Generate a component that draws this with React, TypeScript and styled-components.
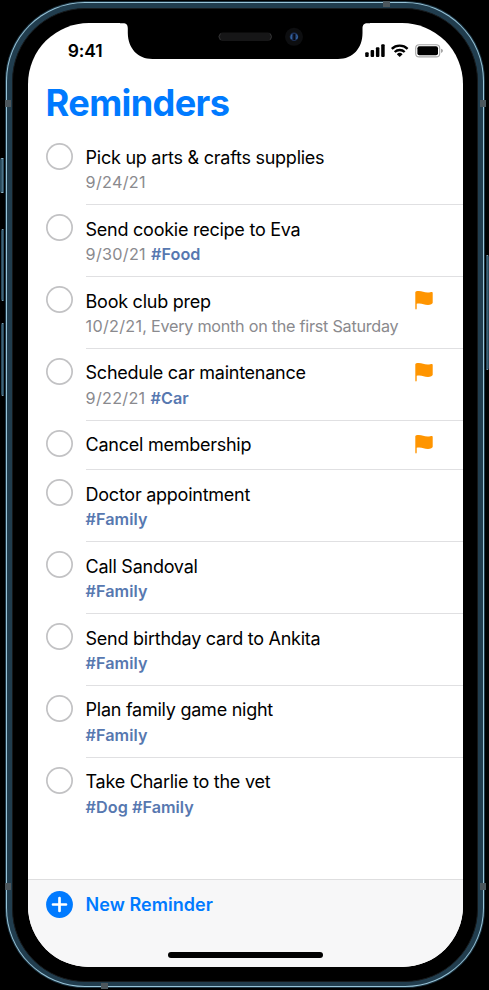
import React from "react";
import styled, { createGlobalStyle, css } from "styled-components";

const GlobalStyle = createGlobalStyle`
  *, *::before, *::after { box-sizing: border-box; }
  body { margin: 0; background: #000; font-family: Inter, "Liberation Sans", sans-serif; }
`;

const Stage = styled.main`
  position: relative;
  width: 489px;
  height: 990px;
  overflow: hidden;
  background: #000;
  padding: 0.8px 3px 1px 5px;
`;

const Rim = styled.div`
  width: 480px;
  height: 987.6px;
  padding: 1.2px;
  border-radius: 80px;
  background: #1c3442;
`;

const Highlight = styled.div`
  height: 100%;
  padding: 1.2px;
  border-radius: 79px;
  background: #98c4d8;
`;

const Band = styled.div`
  height: 100%;
  padding: 4.5px;
  border-radius: 77.9px;
  background: #213d4e;
`;

const Bezel = styled.div`
  height: 100%;
  padding: 14.4px 15.2px;
  border-radius: 73px;
  background: #000;
  border: 1px solid #16191b;
`;

const Screen = styled.div`
  display: flex;
  flex-direction: column;
  height: 944px;
  width: 435px;
  overflow: hidden;
  border-radius: 61px;
  background: #fff;
`;

const SideButton = styled.i<{ $side: "left" | "right"; $top: number; $height: number; $width?: number }>`
  position: absolute;
  top: ${(p) => p.$top}px;
  height: ${(p) => p.$height}px;
  width: ${(p) => p.$width ?? 3}px;
  background: linear-gradient(90deg, #27485a, #587f95);
  border: 1px solid #27485a;
  border-block-color: #8db4c8;
  ${(p) => (p.$side === "left" ? css`left: ${4 - (p.$width ?? 3)}px; border-radius: 2px 0 0 2px;` : css`left: 486px; border-radius: 0 2px 2px 0;`)}
`;

const Antenna = styled.i<{ $x: number; $y: number; $vertical?: boolean }>`
  position: absolute;
  left: ${(p) => p.$x}px;
  top: ${(p) => p.$y}px;
  width: ${(p) => (p.$vertical ? 6 : 7)}px;
  height: ${(p) => (p.$vertical ? 7 : 6)}px;
  background: #4d575d;
`;

const NotchArt = styled.svg`
  position: absolute;
  left: 120px;
  top: 20px;
`;

const StatusBar = styled.header`
  display: flex;
  align-items: center;
  justify-content: space-between;
  height: 54.7px;
  padding: 0 19.3px 0 39.7px;
  flex: none;
`;

const Clock = styled.span`
  font-size: 17.5px;
  font-weight: 600;
  letter-spacing: -0.1px;
`;

const Title = styled.h1`
  flex: none;
  height: 55.5px;
  margin: 0;
  padding-left: 17.5px;
  font-size: 36.2px;
  line-height: 51px;
  font-weight: 700;
  letter-spacing: -0.65px;
  color: #007aff;
`;

const List = styled.ul`
  flex: 1;
  margin: 0;
  padding: 0 0 0 18px;
  list-style: none;
`;

const Row = styled.li<{ $short: boolean }>`
  display: flex;
  height: ${(p) => (p.$short ? 49.5 : 71.85)}px;
`;

const Check = styled.span`
  flex: none;
  width: 27px;
  height: 27px;
  margin: 9.3px 13px 0 -0.5px;
  box-shadow: inset 0 0 0 1.7px #c2c2c4;
  border-radius: 50%;
`;

const RowBody = styled.div<{ $last: boolean }>`
  display: flex;
  flex: 1;
  border-bottom: 1px solid ${(p) => (p.$last ? "transparent" : "#e0e0e2")};
`;

const RowText = styled.div`
  flex: 1;
  padding-top: 11.7px;
  white-space: nowrap;
`;

const RowTitle = styled.div`
  font-size: 18px;
  line-height: 25px;
  letter-spacing: -0.25px;
  color: #000;
`;

const RowNote = styled.div`
  padding-top: 0.5px;
  font-size: 16.2px;
  line-height: 25px;
  letter-spacing: -0.26px;
  color: #8a8a8e;
`;

const DueDate = styled.time`
  letter-spacing: 0.28px;
`;

const Tag = styled.b`
  margin-left: 0.8px;
  font-weight: 600;
  letter-spacing: 0.04px;
  color: #5778b0;

  &:first-child { margin-left: 0; }
`;

const FlagArt = styled.svg`
  flex: none;
  margin: 13px 30px 0 0;
`;

const Toolbar = styled.footer`
  display: flex;
  flex-direction: column;
  align-items: flex-start;
  justify-content: space-between;
  flex: none;
  height: 88px;
  padding: 11px 0 9.5px 17.5px;
  background: #f7f7f8;
  border-top: 1px solid #dededf;
`;

const NewButton = styled.button`
  display: flex;
  align-items: center;
  gap: 13px;
  padding: 0;
  border: 0;
  background: none;
  font: 600 18px/27px Inter, sans-serif;
  letter-spacing: 0.04px;
  color: #007aff;
`;

const HomeIndicator = styled.div`
  width: 155px;
  height: 6px;
  margin-left: 122.5px;
  border-radius: 3px;
  background: #000;
`;

type Reminder = { title: string; date?: string; repeat?: string; tags?: string; flagged?: boolean };

const reminders: Reminder[] = [
  { title: "Pick up arts & crafts supplies", date: "9/24/21" },
  { title: "Send cookie recipe to Eva", date: "9/30/21", tags: "#Food" },
  { title: "Book club prep", date: "10/2/21", repeat: ", Every month on the first Saturday", flagged: true },
  { title: "Schedule car maintenance", date: "9/22/21", tags: "#Car", flagged: true },
  { title: "Cancel membership", flagged: true },
  { title: "Doctor appointment", tags: "#Family" },
  { title: "Call Sandoval", tags: "#Family" },
  { title: "Send birthday card to Ankita", tags: "#Family" },
  { title: "Plan family game night", tags: "#Family" },
  { title: "Take Charlie to the vet", tags: "#Dog #Family" },
];

const Flag = () => (
  <FlagArt width="18" height="20" viewBox="0 0 18 20">
    <path
      d="M0.300 2.300C0.300 1.500 1.800 1 3.800 1C7 1 9 2.500 12.500 2.500C14.800 2.500 16 1.900 16.800 1.900C17.400 1.900 17.700 2.300 17.700 2.800V12.800C17.700 14 15.500 14.900 13 14.900C9.500 14.900 7.500 13.400 4.300 13.400C3 13.400 2.200 13.600 1.700 13.800V18.600C1.700 19.800 0.300 19.800 0.300 18.600Z"
      fill="#ff9500"
    />
  </FlagArt>
);

const Notch = () => (
  <NotchArt width="250" height="42" viewBox="120 20 250 42">
    <path d="M120 20V23.300H123C126.500 23.300 127.800 25 127.800 28.500V33C128 48 137.500 59 152.500 59H338C353 59 362.500 48 362.500 33V28.500C362.500 25 364 23.300 367.500 23.300H370V20Z" fill="#000" />
    <rect x="218.500" y="32.500" width="53.500" height="8.500" rx="4.200" fill="#161617" />
    <path d="M220.500 33.500Q217.500 36.800 220.500 40M270 33.500Q273 36.800 270 40" fill="none" stroke="#343436" strokeWidth="0.900" />
    <circle cx="294" cy="36.800" r="9" fill="#0d0e10" />
    <circle cx="294" cy="36.800" r="4.300" fill="#1c3057" />
    <path d="M292 34.500Q290.500 36.500 291.500 39M296.500 34.500Q298 36.500 296.500 39" fill="none" stroke="#3769a5" strokeWidth="1.200" />
    <path d="M294.200 34V40" stroke="#080a12" strokeWidth="1.800" />
  </NotchArt>
);

const StatusIcons = () => (
  <svg width="80" height="16" viewBox="364 42 80 16">
    <rect x="365.200" y="52.300" width="3.500" height="4.600" rx="1" />
    <rect x="370.600" y="50" width="3.500" height="6.900" rx="1" />
    <rect x="375.900" y="47.200" width="3.500" height="9.700" rx="1" />
    <rect x="381.200" y="44.300" width="3.500" height="12.600" rx="1" />
    <g fill="none" stroke="#000" strokeWidth="2.400">
      <path d="M391.800 48.800A11.500 11.500 0 0 1 407.600 48.800" />
      <path d="M394.700 52A7.300 7.300 0 0 1 404.700 52" />
    </g>
    <path d="M399.700 57L396.800 54.200A4.200 4.200 0 0 1 402.600 54.200Z" />
    <rect x="415.700" y="44.700" width="24" height="12.200" rx="3.500" fill="none" stroke="#a5a5a5" strokeWidth="1.100" />
    <rect x="417.400" y="46.300" width="20.600" height="9" rx="2" />
    <path d="M441 48.700Q443 49.200 443 50.800T441 52.900Z" fill="#a5a5a5" />
  </svg>
);

export default function App() {
  return (
    <Stage>
      <GlobalStyle />
      <Rim>
        <Highlight>
          <Band>
            <Bezel>
              <Screen>
                <StatusBar>
                  <Clock>9:41</Clock>
                  <StatusIcons />
                </StatusBar>
                <Title>Reminders</Title>
                <List>
                  {reminders.map((r, i) => (
                    <Row key={r.title} $short={!r.date && !r.tags}>
                      <Check />
                      <RowBody $last={i === reminders.length - 1}>
                        <RowText>
                          <RowTitle>{r.title}</RowTitle>
                          <RowNote>
                            {r.date && <DueDate>{r.date}</DueDate>}
                            {r.repeat}
                            {r.date && r.tags ? " " : ""}
                            {r.tags && <Tag>{r.tags}</Tag>}
                          </RowNote>
                        </RowText>
                        {r.flagged && <Flag />}
                      </RowBody>
                    </Row>
                  ))}
                </List>
                <Toolbar>
                  <NewButton>
                    <svg width="27" height="27" viewBox="0 0 27 27">
                      <circle cx="13.500" cy="13.500" r="13.400" fill="#007aff" />
                      <path d="M13.500 7V20M7 13.500H20" stroke="#fff" strokeWidth="2.700" strokeLinecap="round" />
                    </svg>
                    New Reminder
                  </NewButton>
                  <HomeIndicator />
                </Toolbar>
              </Screen>
            </Bezel>
          </Band>
        </Highlight>
      </Rim>
      <Notch />
      <SideButton $side="left" $top={158} $height={35} $width={4} />
      <SideButton $side="left" $top={229} $height={72} />
      <SideButton $side="left" $top={323} $height={73} />
      <SideButton $side="right" $top={255} $height={115} />
      <Antenna $x={383} $y={1} />
      <Antenna $x={101} $y={983} />
      <Antenna $x={5} $y={100} $vertical />
      <Antenna $x={480} $y={100} $vertical />
      <Antenna $x={5} $y={883} $vertical />
      <Antenna $x={480} $y={883} $vertical />
    </Stage>
  );
}
